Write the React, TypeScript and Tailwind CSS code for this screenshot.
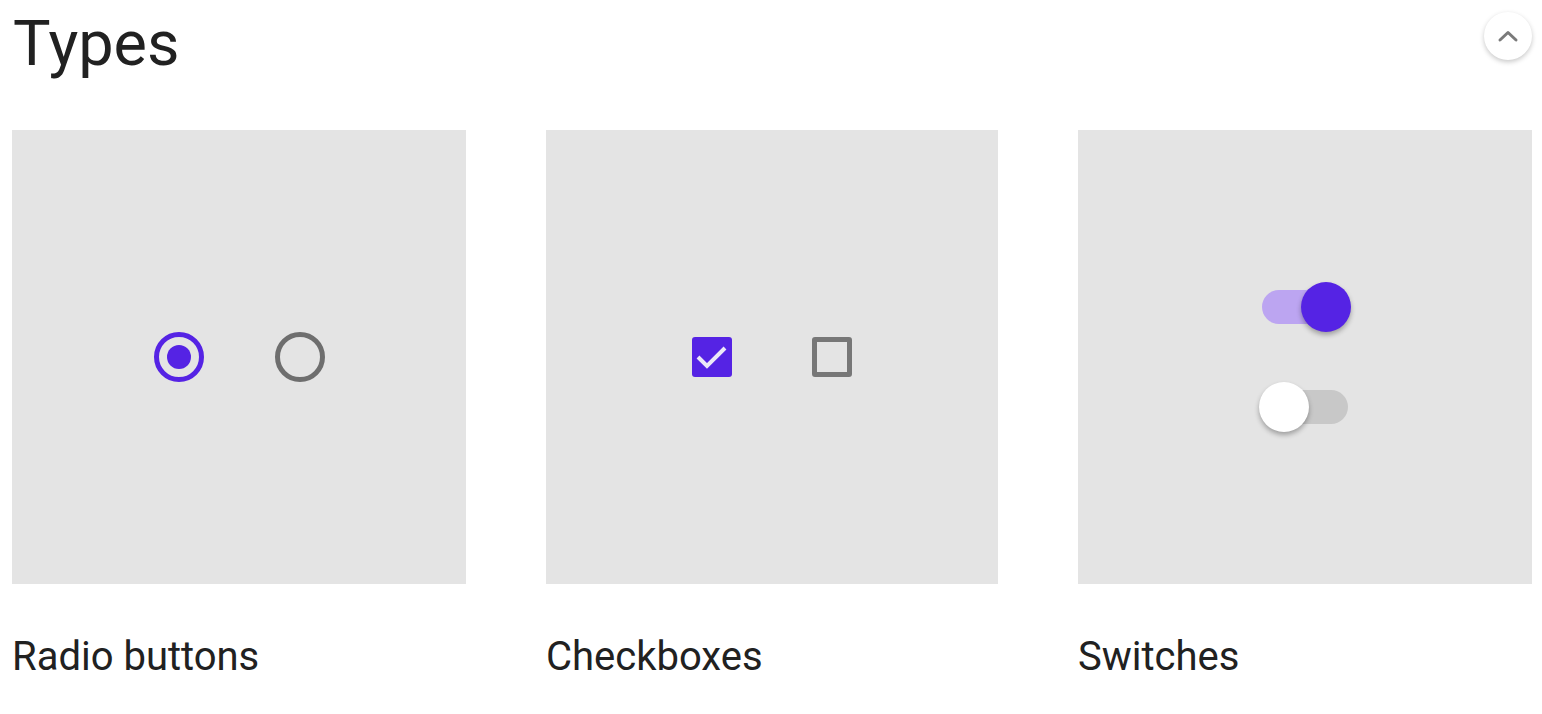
import React from "react";

function Card({ label, children }: { label: string; children: React.ReactNode }) {
  return (
    <div className="flex flex-col">
      <div className="h-[454px] bg-[#e4e4e4] flex items-center justify-center">{children}</div>
      <div className="mt-[50px] text-[40px] leading-[46px] text-[#212121]">{label}</div>
    </div>
  );
}

export default function App() {
  return (
    <div className="w-[1542px] h-[714px] bg-white overflow-hidden pl-[12px] pr-[10px] pt-[6px]" style={{ fontFamily: "Roboto, 'Noto Sans', sans-serif" }}>
      <div className="flex items-start justify-between h-[124px]">
        <h1 className="text-[63px] leading-[76px] text-[#212121] font-normal ml-[1px]">Types</h1>
        <button className="mt-[6px] w-[48px] h-[48px] rounded-full bg-white shadow-[0_2px_5px_rgba(0,0,0,0.22)] flex items-center justify-center">
          <svg width="22" height="14" viewBox="0 0 22 14">
            <path d="M3 11 L11 3.5 L19 11" fill="none" stroke="#7a7a7a" strokeWidth="3" strokeLinecap="round" strokeLinejoin="round" />
          </svg>
        </button>
      </div>
      <div className="grid grid-cols-[454px_452px_454px] gap-[80px]">
        <Card label="Radio buttons">
          <div className="flex items-center gap-[71px]">
            <div className="w-[50px] h-[50px] rounded-full border-[5px] border-[#5523e4] flex items-center justify-center">
              <div className="w-[24px] h-[24px] rounded-full bg-[#5523e4]" />
            </div>
            <div className="w-[50px] h-[50px] rounded-full border-[5px] border-[#6e6e6e]" />
          </div>
        </Card>
        <Card label="Checkboxes">
          <div className="flex items-center gap-[80px]">
            <div className="w-[40px] h-[40px] rounded-[3px] bg-[#5523e4]">
              <svg width="40" height="40" viewBox="0 0 40 40">
                <path d="M6 20 L15 29 L33 11" fill="none" stroke="#ece8f8" strokeWidth="4" />
              </svg>
            </div>
            <div className="w-[40px] h-[40px] rounded-[3px] border-[5px] border-[#777777]" />
          </div>
        </Card>
        <Card label="Switches">
          <div className="flex flex-col items-center gap-[66px]">
            <div className="relative w-[86px] h-[34px] rounded-full bg-[#bca5f1]">
              <div className="absolute right-[-3px] top-[-8px] w-[50px] h-[50px] rounded-full bg-[#5523e4] shadow-[0_3px_5px_rgba(0,0,0,0.3)]" />
            </div>
            <div className="relative w-[86px] h-[34px] rounded-full bg-[#c8c8c8]">
              <div className="absolute left-[-3px] top-[-8px] w-[50px] h-[50px] rounded-full bg-white shadow-[0_3px_5px_rgba(0,0,0,0.3)]" />
            </div>
          </div>
        </Card>
      </div>
    </div>
  );
}
